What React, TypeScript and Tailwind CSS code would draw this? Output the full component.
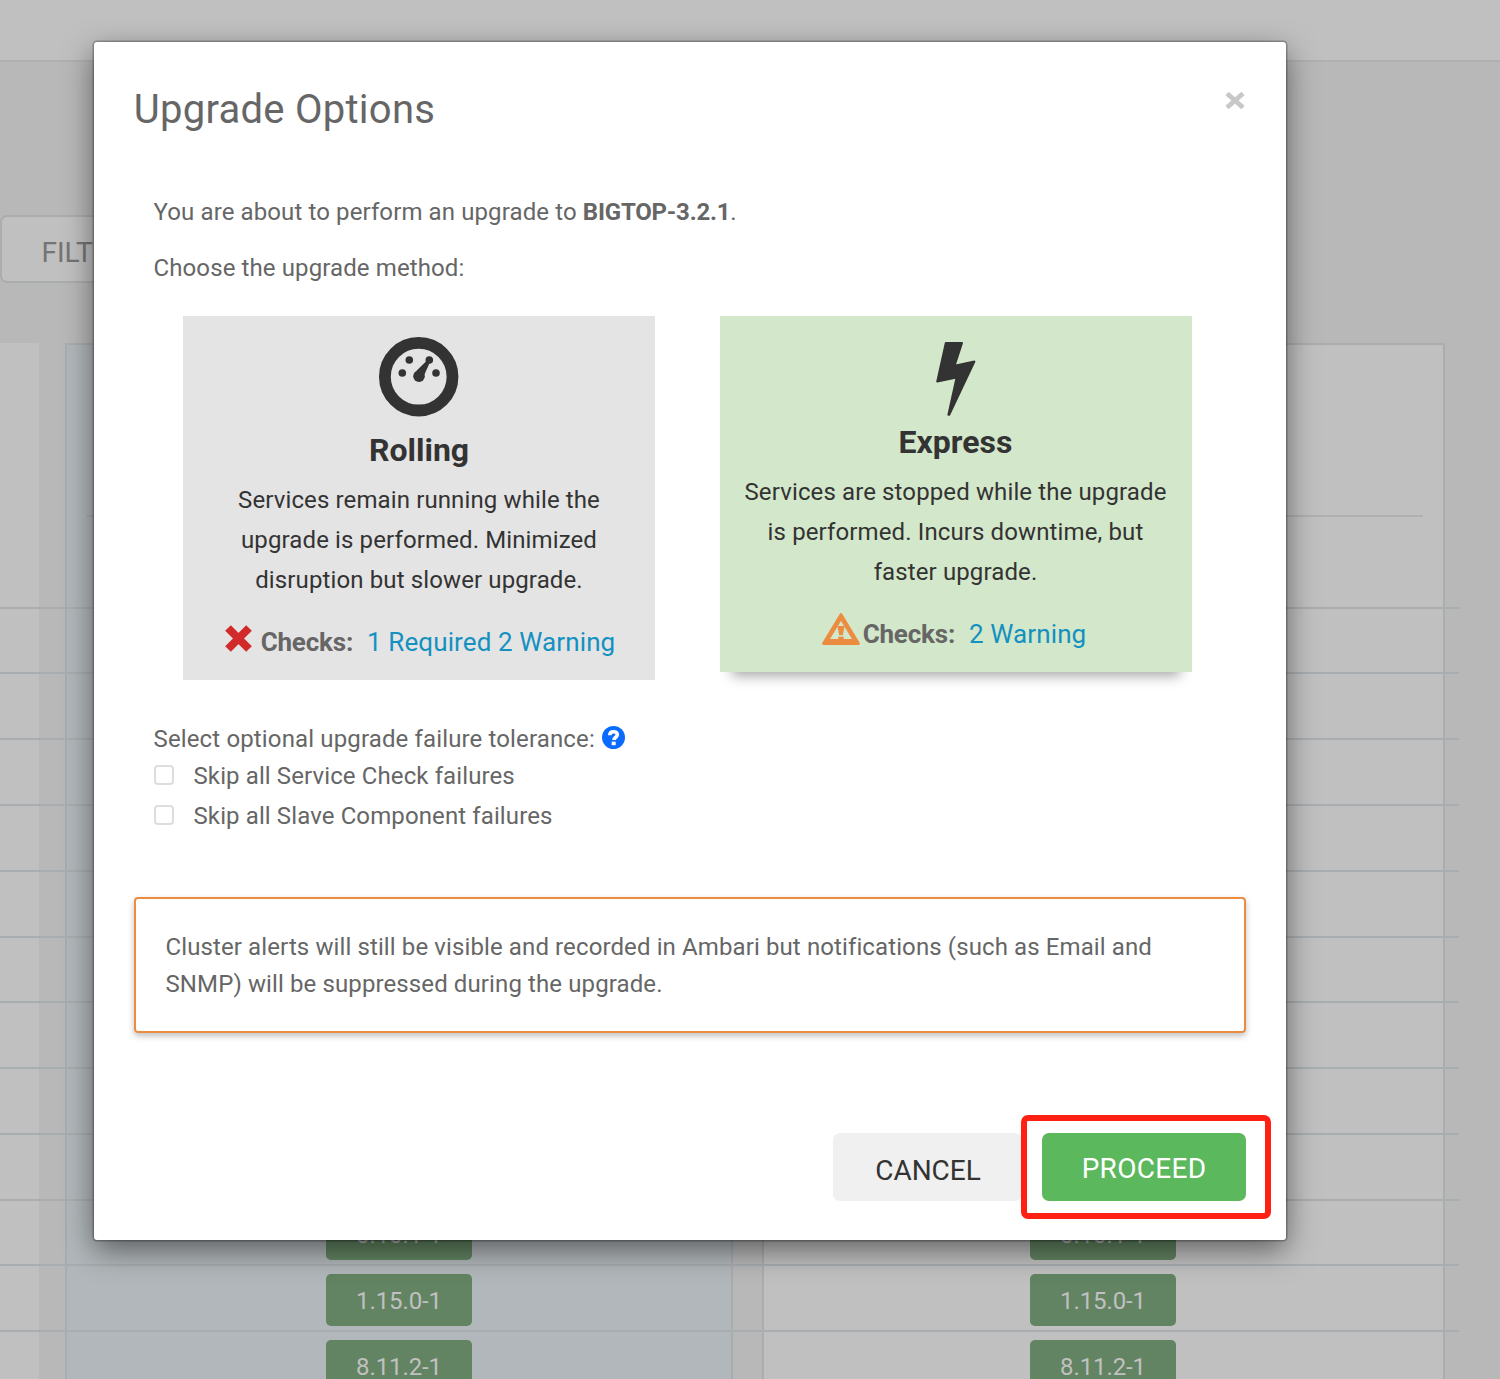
import React from "react";

const ROWS = ["", "", "", "", "", "", "", "", "", "0.10.1-1", "1.15.0-1", "8.11.2-1"];

function VersionBadge({ version }: { version: string }) {
  return (
    <span className="mt-[4px] flex h-[52px] w-[146px] items-center justify-center rounded-[5px] bg-[#628462] pt-[2px] text-[24px] leading-none tracking-[-0.1px] text-[#c0c0c0]">
      {version}
    </span>
  );
}

function Backdrop() {
  return (
    <div className="col-start-1 row-start-1 h-[1379px] w-[1500px] overflow-hidden bg-[#b8b8b8]">
      <div className="h-[62px] border-b-2 border-[#b0b0b0] bg-[#c0c0c0]" />
      <div className="mt-[153px] flex h-[68px] w-[220px] items-center rounded-[7px] border-2 border-[#aaadae] bg-[#c0c0c0] pl-[39.5px] pt-[8px] text-[28px] leading-none text-[#747474]">
        FILTER
      </div>
      <div className="mt-[60px] grid">
        <div className="col-start-1 row-start-1 flex h-[1060px]">
          <div className="w-[39px] bg-[#c0c0c0]" />
          <div className="ml-[26px] w-[668px] border-2 border-[#a8adb0] bg-[#b1b7ba] px-5">
            <div className="h-[172px] border-b-2 border-[#aaaaaa]" />
          </div>
          <div className="ml-[29px] w-[683px] border-2 border-[#a8adb0] bg-[#c0c0c0] px-5">
            <div className="h-[172px] border-b-2 border-[#b0b0b0]" />
          </div>
        </div>
        <div className="col-start-1 row-start-1 flex w-[1459px] flex-col pt-[263.7px]">
          {ROWS.map((version, i) => (
            <div key={i} className="flex h-[65.77px] shrink-0 items-center border-t-2 border-[#a8adb0]">
              {version && (
                <>
                  <div className="ml-[65px] flex w-[668px] justify-center">
                    <VersionBadge version={version} />
                  </div>
                  <div className="ml-[29px] flex w-[682px] justify-center">
                    <VersionBadge version={version} />
                  </div>
                </>
              )}
            </div>
          ))}
        </div>
      </div>
    </div>
  );
}

function GaugeIcon() {
  return (
    <svg width="80" height="80" viewBox="0 0 80 80" fill="#333">
      <circle cx="39.7" cy="39.7" r="33.8" fill="none" stroke="#333" strokeWidth="11.8" />
      <circle cx="23.3" cy="36" r="3.8" />
      <circle cx="30.3" cy="23" r="3.8" />
      <circle cx="50.3" cy="23" r="3.8" />
      <circle cx="57" cy="36" r="3.8" />
      <circle cx="40" cy="39.2" r="5.8" />
      <path d="M37 34.2 48 23.5l3 1.5-6.2 14z" />
    </svg>
  );
}

function BoltIcon() {
  return (
    <svg width="40" height="76" viewBox="0 0 40 76" fill="#333" stroke="#333" strokeWidth="2" strokeLinejoin="round">
      <path d="M9.8 2H26L18.6 24.8 38.4 20.6 13.2 73.8H12.4L20.6 36.4 1.2 40.6Z" />
    </svg>
  );
}

function CrossIcon() {
  return (
    <svg className="mr-[9px] mt-[-7px]" width="27" height="27" viewBox="0 0 27 27">
      <path d="M3 3 24 24M24 3 3 24" stroke="#d12a2a" strokeWidth="8" />
    </svg>
  );
}

function WarningIcon() {
  return (
    <svg className="mr-[3px] mt-[-10px]" width="38" height="32" viewBox="0 0 38 32" fill="#eb8c40">
      <path
        fillRule="evenodd"
        d="M18 .6Q19 -.4 20 .6L37.8 30Q38 31.8 36.8 32H1.2Q0 31.8.2 30ZM19 8 8 26H30Z"
      />
      <path d="M15.4 13h7.2l-1.8 9.3h-3.6zM16.3 23.8h5.4v4h-5.4z" />
    </svg>
  );
}

function HelpIcon() {
  return (
    <svg className="ml-[7px] mt-[-4px]" width="23" height="23" viewBox="0 0 23 23">
      <circle cx="11.5" cy="11.5" r="11.5" fill="#0a6cff" />
      <path d="M7.7 9.2C7.8 6.6 9.3 5.8 11.5 5.8s3.8 1 3.8 3c0 2.4-3.3 2.5-3.3 5.2" fill="none" stroke="#fff" strokeWidth="3.6" />
      <path d="M9.7 15.6h4v3.6h-4z" fill="#fff" />
    </svg>
  );
}

function Checkbox({ label }: { label: string }) {
  return (
    <label className="flex h-10 items-center whitespace-nowrap">
      <span className="mr-[20px] mt-[-2px] h-5 w-5 rounded-[4px] border-2 border-[#ddd] bg-white" />
      {label}
    </label>
  );
}

function UpgradeDialog() {
  return (
    <div className="col-start-1 row-start-1 ml-[94px] mt-[42px] h-[1198px] w-[1192px] rounded-[3px] bg-white px-10 text-[24px] leading-[37px] tracking-[0.11px] text-[#666] shadow-[0_0_0_1.5px_rgba(0,0,0,0.25),0_10px_30px_rgba(0,0,0,0.5)]">
      <div className="flex justify-between pt-[46px]">
        <h1 className="ml-[-0.2px] text-[40px] leading-[44px] tracking-[0.26px]">Upgrade Options</h1>
        <svg className="mr-[1px] mt-[4px]" width="20" height="17" viewBox="0 0 20 17">
          <path d="M2 1.5 18 15.5M18 1.5 2 15.5" stroke="#c8c8c8" strokeWidth="4.8" />
        </svg>
      </div>
      <div className="pl-[19.5px] pt-[62px]">
        <p>
          You are about to perform an upgrade to <b className="tracking-[-0.2px]">BIGTOP-3.2.1</b>.
        </p>
        <p className="mt-[19px]">Choose the upgrade method:</p>
      </div>
      <div className="mt-[29px] flex items-start gap-[64.5px] pl-[49px]">
        <div className="flex h-[364px] w-[472px] flex-col items-center bg-[#e4e4e4] pt-[21px] text-center text-[#333]">
          <GaugeIcon />
          <h2 className="mt-[11px] text-[32px] font-bold leading-[44px] tracking-normal">Rolling</h2>
          <p className="mt-[8px] whitespace-nowrap leading-[40px] tracking-[0.12px]">
            Services remain running while the
            <br />
            upgrade is performed. Minimized
            <br />
            disruption but slower upgrade.
          </p>
          <div className="ml-[2px] mt-[22px] flex h-10 items-center whitespace-nowrap text-[26px]">
            <CrossIcon />
            <b className="tracking-[-0.2px] text-[#666]">Checks:</b>
            <span className="ml-[14px] text-[#1491c1]">1 Required 2 Warning</span>
          </div>
        </div>
        <div className="flex h-[356px] w-[472px] flex-col items-center bg-[#d3e7ca] pt-[25px] text-center text-[#333] shadow-[0_16px_12px_-12px_rgba(0,0,0,0.35)]">
          <BoltIcon />
          <h2 className="mt-[3px] text-[32px] font-bold leading-[44px] tracking-normal">Express</h2>
          <p className="mt-[8px] whitespace-nowrap leading-[40px] tracking-[0.12px]">
            Services are stopped while the upgrade
            <br />
            is performed. Incurs downtime, but
            <br />
            faster upgrade.
          </p>
          <div className="mr-[3px] mt-[22px] flex h-10 items-center whitespace-nowrap text-[26px]">
            <WarningIcon />
            <b className="tracking-[-0.2px] text-[#666]">Checks:</b>
            <span className="ml-[14px] text-[#1491c1]">2 Warning</span>
          </div>
        </div>
      </div>
      <div className="pl-[19.5px] pt-[41px]">
        <div className="flex items-center tracking-[0.14px]">
          Select optional upgrade failure tolerance:
          <HelpIcon />
        </div>
        <div className="mt-[-2px]">
          <Checkbox label="Skip all Service Check failures" />
          <Checkbox label="Skip all Slave Component failures" />
        </div>
      </div>
      <div className="mt-[61px] h-[136px] whitespace-nowrap rounded-[4px] border-2 border-[#eb8c40] pl-[29.5px] pt-[30px] shadow-[0_3px_6px_rgba(0,0,0,0.25)]">
        Cluster alerts will still be visible and recorded in Ambari but notifications (such as Email and
        <br />
        SNMP) will be suppressed during the upgrade.
      </div>
      <div className="mr-[-25px] mt-[82px] flex items-center justify-end text-[28px] leading-none tracking-normal">
        <button className="h-[68px] w-[189px] rounded-[7px] bg-[#f0f0f0] pl-[1px] pt-[7px] text-[#333]">CANCEL</button>
        <div className="ml-[-1px] h-[104px] w-[250px] rounded-[7px] border-[6px] border-[#ff2014] pl-[15px] pt-[12px]">
          <button className="h-[68px] w-[204px] rounded-[7px] bg-[#5cb85c] pt-[3px] tracking-[0.3px] text-white">PROCEED</button>
        </div>
      </div>
    </div>
  );
}

export default function App() {
  return (
    <main className="grid h-[1379px] w-[1500px] items-start justify-items-start overflow-hidden font-['Roboto',sans-serif]">
      <Backdrop />
      <UpgradeDialog />
    </main>
  );
}
